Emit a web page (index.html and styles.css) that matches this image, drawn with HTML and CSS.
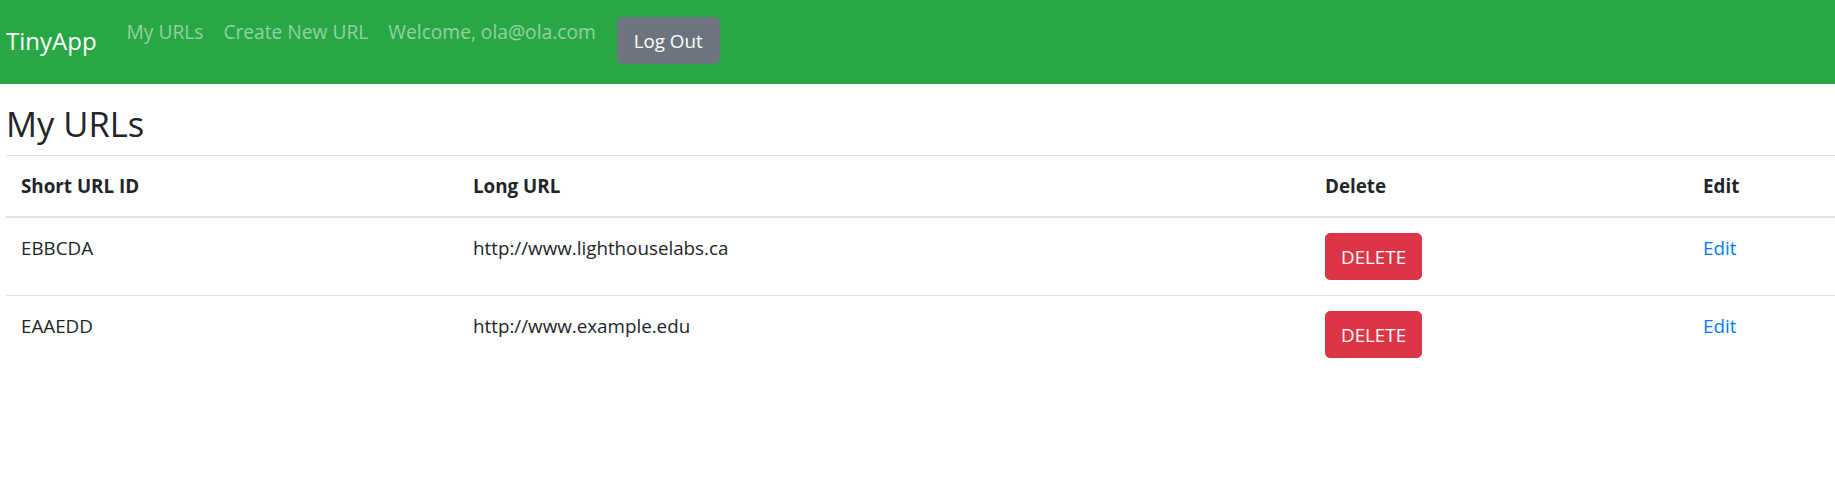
FILE: index.html
```html
<!DOCTYPE html>
<html lang="en">
<head>
<meta charset="utf-8">
<title>TinyApp</title>
<link rel="stylesheet" href="styles.css">
</head>
<body>
<nav class="navbar">
  <a class="brand" href="#">TinyApp</a>
  <div class="nav-links">
    <a class="nav-link" href="#">My URLs</a>
    <a class="nav-link" href="#">Create New URL</a>
    <span class="nav-link">Welcome, ola@ola.com</span>
  </div>
  <button class="btn btn-secondary">Log Out</button>
</nav>
<main class="content">
  <h3 class="title">My URLs</h3>
  <table class="table">
    <colgroup>
      <col class="c1"><col class="c2"><col class="c3"><col class="c4">
    </colgroup>
    <thead>
      <tr><th>Short URL ID</th><th>Long URL</th><th>Delete</th><th>Edit</th></tr>
    </thead>
    <tbody>
      <tr>
        <td>EBBCDA</td>
        <td>http://www.lighthouselabs.ca</td>
        <td><button class="btn btn-danger">DELETE</button></td>
        <td><a class="edit" href="#">Edit</a></td>
      </tr>
      <tr>
        <td>EAAEDD</td>
        <td>http://www.example.edu</td>
        <td><button class="btn btn-danger">DELETE</button></td>
        <td><a class="edit" href="#">Edit</a></td>
      </tr>
    </tbody>
  </table>
</main>
</body>
</html>
```
FILE: styles.css
```css
html, body {
  margin: 0;
  padding: 0;
  background: #fff;
  overflow: hidden;
}
body {
  font-family: "Open Sans", "Noto Sans", sans-serif;
  font-size: 18.8px;
  line-height: 30px;
  color: #212529;
}
.navbar {
  display: flex;
  align-items: flex-start;
  height: 84px;
  box-sizing: border-box;
  padding: 17px 0 0 6px;
  background: #28a745;
}
.brand {
  font-size: 24px;
  line-height: 37px;
  padding-top: 5px;
  color: #fff;
  text-decoration: none;
  margin-right: 20px;
}
.nav-links {
  display: flex;
  margin-right: 11px;
}
.nav-link {
  padding: 0 10px;
  font-size: 19.2px;
  color: rgba(255, 255, 255, 0.5);
  text-decoration: none;
}
.btn {
  font-family: inherit;
  font-size: 18.8px;
  line-height: 30px;
  padding: 7px 15px;
  border: 1px solid transparent;
  border-radius: 5px;
  color: #fff;
  cursor: pointer;
}
.btn-secondary {
  background: #6c757d;
  border-color: #6c757d;
  padding: 7.5px 16px;
}
.btn-danger {
  background: #dc3545;
  border-color: #dc3545;
  display: block;
  padding-top: 7.5px;
  padding-bottom: 7.5px;
}
.content {
  padding-left: 6px;
}
.title {
  margin: 19px 0 10px 0;
  font-size: 34.5px;
  line-height: 42px;
  font-weight: 500;
}
.table {
  width: 1829px;
  border-collapse: collapse;
  table-layout: fixed;
}
.c1 { width: 452px; }
.c2 { width: 852px; }
.c3 { width: 378px; }
.table th, .table td {
  padding: 15px;
  text-align: left;
  vertical-align: top;
  border-top: 1px solid #dee2e6;
}
.table thead th {
  font-weight: 700;
  border-bottom: 2px solid #dee2e6;
}
.edit {
  color: #007bff;
  text-decoration: none;
}
```
